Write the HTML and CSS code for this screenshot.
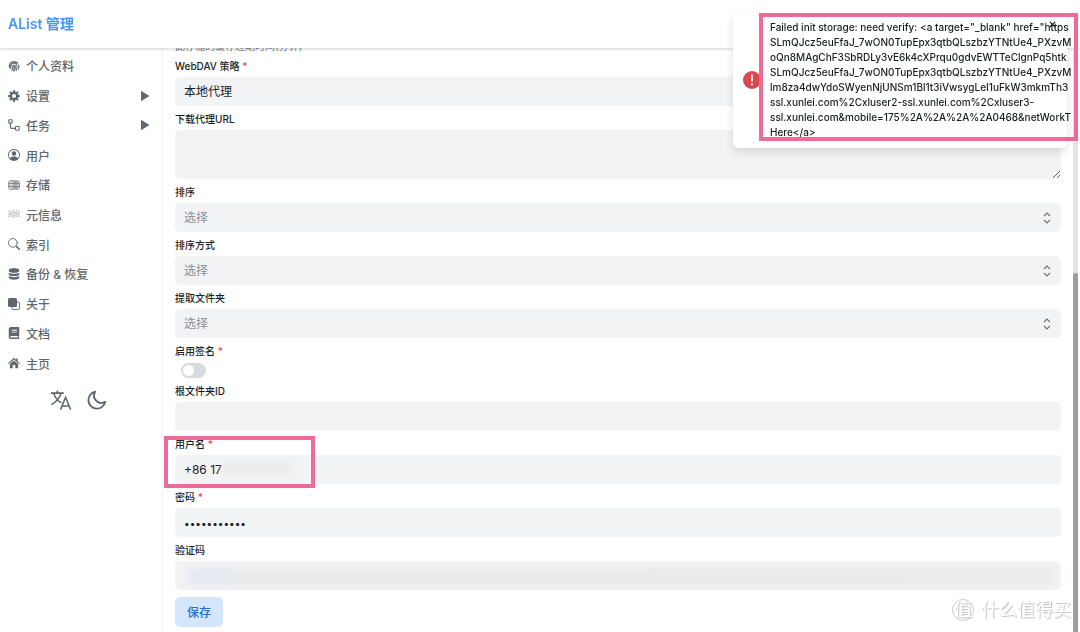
FILE: index.html
```html
<!DOCTYPE html>
<html lang="zh-CN">
<head>
  <meta charset="UTF-8">
  <meta name="viewport" content="width=device-width, initial-scale=1.0">
  <title>AList 管理</title>
  <link rel="stylesheet" href="styles.css">
</head>
<body>

<header class="header">
  <h1>AList 管理</h1>
</header>

<div class="layout">
  <aside class="sidebar">
    <nav class="menu">
      <a href="#">
        <svg viewBox="0 0 16 16" fill="none" stroke="currentColor" stroke-width="1.400" stroke-linecap="round"><path d="M3 4.2C5.5 1.2 10.500 1.200 13 4.200M1.500 8c.3-5 6-7 10-4M14.300 6.500c.6 2 .3 4-.4 5.500M3 11.500c1-1.500.6-3 1-4.500 1-3.600 7-3.600 8 .5.300 2 0 4.500-1 6.500M5 13.200c1.600-2 1-4 1.600-5.500.6-1.300 3-1 3.200.8.2 2.200-.4 4.500-1.600 6.200M8.200 8.500c.2 2-.3 4-1.400 5.800M1.800 9.800l1-3"/></svg>
        <span>个人资料</span>
      </a>
      <a href="#">
        <svg viewBox="0 0 16 16" fill="none" stroke="currentColor"><circle cx="8" cy="8" r="4.300" stroke-width="3"/><path stroke-width="3" d="M8 .3v2.400M8 13.300v2.400M.3 8h2.400M13.300 8h2.400M2.600 2.600l1.600 1.600M11.800 11.800l1.600 1.600M2.600 13.400l1.600-1.600M11.800 4.200l1.600-1.600"/></svg>
        <span>设置</span>
        <svg class="arrow" viewBox="0 0 10 12" fill="currentColor"><path d="M1 .8v10.400L9.500 6z"/></svg>
      </a>
      <a href="#">
        <svg viewBox="0 0 16 16" fill="none" stroke="currentColor" stroke-width="1.400"><rect x="1" y="1" width="4.500" height="4.500" rx="1"/><rect x="10" y="10" width="5" height="5" rx="1"/><path d="M3.200 5.500v5c0 1.400.8 2 2 2H10"/></svg>
        <span>任务</span>
        <svg class="arrow" viewBox="0 0 10 12" fill="currentColor"><path d="M1 .8v10.400L9.500 6z"/></svg>
      </a>
      <a href="#">
        <svg viewBox="0 0 16 16" fill="currentColor"><path fill-rule="evenodd" d="M8 0a8 8 0 1 0 0 16A8 8 0 0 0 8 0zm0 1.200a6.800 6.800 0 0 1 5.200 11.100C12.300 10.900 10.800 10 8 10s-4.300.9-5.200 2.300A6.800 6.800 0 0 1 8 1.200zM8 3a3 3 0 1 0 0 6 3 3 0 0 0 0-6z"/></svg>
        <span>用户</span>
      </a>
      <a href="#">
        <svg viewBox="0 0 16 16" fill="none" stroke="currentColor" stroke-width="1.200"><rect x="1" y="2.500" width="14" height="11" rx="2"/><path d="M1 6.200h14M1 9.800h14M3.500 4.400h1M6 4.400h7M3.500 8h1M6 8h7M3.500 11.700h1M6 11.700h7"/></svg>
        <span>存储</span>
      </a>
      <a href="#">
        <svg viewBox="0 0 16 16" fill="none" stroke="currentColor" stroke-width="1" opacity=".7"><path stroke-dasharray="1.500 1" d="M1.500 3v10M5 3v10M8 2v12M11 3v10M14.500 3v10M1 5l7 6M8 5l7 6M1 11l7-6M8 11l7-6"/></svg>
        <span>元信息</span>
      </a>
      <a href="#">
        <svg viewBox="0 0 16 16" fill="none" stroke="currentColor" stroke-linecap="round"><circle cx="6.500" cy="6.500" r="5.800" stroke-width="1.200"/><path stroke-width="2" d="M11.200 11.200l3.800 3.800"/></svg>
        <span>索引</span>
      </a>
      <a href="#">
        <svg viewBox="0 0 16 16" fill="currentColor"><path d="M1 3c0-3.400 14-3.400 14 0v1c0 3.200-14 3.200-14 0zM1 6.300c3 2 11 2 14 0V8.500c0 3-14 3-14 0zM1 10.800c3 2 11 2 14 0V13c0 3.400-14 3.400-14 0z"/></svg>
        <span>备份 &amp; 恢复</span>
      </a>
      <a href="#">
        <svg viewBox="0 0 16 16"><rect x="5.500" y="5.500" width="9.800" height="9.800" rx="1" fill="none" stroke="currentColor" stroke-width="1.200"/><rect x="0" y="0" width="12" height="12" rx="2" fill="currentColor"/></svg>
        <span>关于</span>
      </a>
      <a href="#">
        <svg viewBox="0 0 16 16" fill="currentColor"><path fill-rule="evenodd" d="M4 0h10a1 1 0 0 1 1 1v10.500l-.6.600v2l.6.600V16H4a3 3 0 0 1-3-3V3a3 3 0 0 1 3-3zm1 3.700v1.200h7V3.700zm0 2.500v1.200h7V6.200zM4 12a1 1 0 0 0 0 2h9v-2z"/></svg>
        <span>文档</span>
      </a>
      <a href="#">
        <svg viewBox="0 0 16 16" fill="currentColor"><path d="M8 1l2.800 2.500V2h2v3.300L16 8.200l-1 1.100L8 3.200 1 9.300 0 8.200z"/><path d="M8 4.500l5.500 4.800V15H9.800v-4.500H6.200V15H2.500V9.300z"/></svg>
        <span>主页</span>
      </a>
    </nav>
    <div class="tools">
      <button type="button" aria-label="语言">
        <svg viewBox="0 0 24 24" fill="none" stroke="currentColor" stroke-width="1.700"><path d="M1 4.500h14M8 1.500v3M12 4.500C10.500 10 7 14 1.500 17M4 4.500c1.500 5 4.500 8.500 8.500 10.500M11.500 22.500L17 9l5.500 13.500M13.300 18.500h7.400"/></svg>
      </button>
      <button type="button" aria-label="深色模式">
        <svg viewBox="0 0 24 24" fill="none" stroke="currentColor" stroke-width="2" stroke-linejoin="round"><path d="M10 3A9.300 9.300 0 1 0 21 14 8 8 0 0 1 10 3z"/></svg>
      </button>
    </div>
  </aside>

  <main class="content">
    <p class="hint">此存储的缓存过期时间(分钟)</p>
    <form class="form">
      <div class="field">
        <label for="webdav">WebDAV 策略 <em>*</em></label>
        <div class="select">
          <select id="webdav"><option>本地代理</option></select>
        </div>
      </div>
      <div class="field">
        <label for="proxy">下载代理URL</label>
        <textarea id="proxy"></textarea>
      </div>
      <div class="field">
        <label for="order">排序</label>
        <div class="select">
          <select id="order" class="empty"><option>选择</option></select>
          <svg viewBox="0 0 8 12"><path d="M1 4l3-3 3 3M1 8l3 3 3-3"/></svg>
        </div>
      </div>
      <div class="field">
        <label for="direction">排序方式</label>
        <div class="select">
          <select id="direction" class="empty"><option>选择</option></select>
          <svg viewBox="0 0 8 12"><path d="M1 4l3-3 3 3M1 8l3 3 3-3"/></svg>
        </div>
      </div>
      <div class="field">
        <label for="folder">提取文件夹</label>
        <div class="select">
          <select id="folder" class="empty"><option>选择</option></select>
          <svg viewBox="0 0 8 12"><path d="M1 4l3-3 3 3M1 8l3 3 3-3"/></svg>
        </div>
      </div>
      <div class="field">
        <label for="sign">启用签名 <em>*</em></label>
        <input type="checkbox" id="sign" class="switch">
      </div>
      <div class="field">
        <label for="root">根文件夹ID</label>
        <input type="text" id="root">
      </div>
      <div class="field marked">
        <label for="username">用户名 <em>*</em></label>
        <input type="text" id="username" value="+86 17">
      </div>
      <div class="field">
        <label for="password">密码 <em>*</em></label>
        <input type="password" id="password" value="abcdefghijk">
      </div>
      <div class="field">
        <label for="code">验证码</label>
        <div class="redacted"><input type="text" id="code"></div>
      </div>
      <button type="submit" class="save">保存</button>
    </form>
  </main>
</div>

<div class="scrollbar"><div class="thumb"></div></div>

<div class="toast" role="alert">
  <svg class="toast-icon" viewBox="0 0 18 18"><circle cx="9" cy="9" r="9" fill="#d9484c"/><path d="M9 4v6" stroke="#fff" stroke-width="1.600" stroke-linecap="round"/><circle cx="9" cy="13.300" r="1.100" fill="#fff"/></svg>
  <p>Failed init storage: need verify: &lt;a target="_blank" href="https<br>
    SLmQJcz5euFfaJ_7wON0TupEpx3qtbQLszbzYTNtUe4_PXzvM<br>
    oQn8MAgChF3SbRDLy3vE6k4cXPrqu0gdvEWTTeClgnPq5htk<br>
    SLmQJcz5euFfaJ_7wON0TupEpx3qtbQLszbzYTNtUe4_PXzvM<br>
    lm8za4dwYdoSWyenNjUNSm1Bl1t3iVwsygLeI1uFkW3mkmTh3<br>
    ssl.xunlei.com%2Cxluser2-ssl.xunlei.com%2Cxluser3-<br>
    ssl.xunlei.com&amp;mobile=175%2A%2A%2A%2A0468&amp;netWorkT<br>
    Here&lt;/a&gt;</p>
  <button type="button" class="close" aria-label="关闭"><svg viewBox="0 0 8 8"><path d="M1 1l6 6M7 1L1 7"/></svg></button>
</div>

<div class="watermark"><span class="seal">值</span>什么值得买</div>

</body>
</html>
```
FILE: styles.css
```css
*, *::before, *::after {
  box-sizing: border-box;
}
body {
  margin: 0;
  height: 100vh;
  overflow: hidden;
  background: #fff;
  color: #1a1d1f;
  font-family: Inter, "Noto Sans CJK SC", sans-serif;
  font-size: 12px;
}
button, input, select, textarea {
  font: inherit;
  color: inherit;
}
.header {
  position: relative;
  z-index: 1;
  display: flex;
  align-items: center;
  height: 48px;
  padding: 0 8px 2px;
  background: #fff;
  box-shadow: 0 1px 3px rgba(0, 0, 0, 0.18);
}
.header h1 {
  margin: 0;
  font-size: 14px;
  font-weight: 600;
  color: #4595f5;
}
.layout {
  display: flex;
}
.sidebar {
  flex: 0 0 163px;
  min-height: calc(100vh - 48px);
  padding: 3px 8px;
  border-right: 2px solid #f7f7f8;
}
.menu {
  display: grid;
  grid-auto-rows: 1fr;
  height: 327px;
}
.menu a {
  display: flex;
  align-items: center;
  gap: 6px;
  color: #60666c;
  font-weight: 500;
  text-decoration: none;
}
.menu svg {
  width: 12px;
  height: 12px;
}
.menu .arrow {
  width: 10px;
  margin-left: auto;
  margin-right: 3px;
}
.tools {
  display: flex;
  justify-content: center;
  gap: 14px;
  padding: 11px 3px 11px 0;
}
.tools button {
  display: flex;
  padding: 0;
  border: 0;
  background: none;
  color: #60666c;
}
.tools svg {
  width: 22px;
  height: 22px;
}
.content {
  flex: 1;
  min-width: 0;
  padding: 0 19px 0 12px;
}
.hint {
  margin: -10px 0 0;
  height: 18px;
  line-height: 16px;
  font-size: 10px;
  color: #787f85;
}
.form {
  display: flex;
  flex-direction: column;
  gap: 3px;
}
.field label {
  display: block;
  height: 21px;
  line-height: 20px;
  font-size: 10px;
  font-weight: 500;
}
.field em {
  color: #e5484d;
  font-style: normal;
}
.field input, .field select, .field textarea {
  display: block;
  width: 100%;
  height: 29px;
  padding: 0 9px;
  border: 0;
  border-radius: 5px;
  background: #f1f3f5;
  outline: none;
}
.field input[type="password"] {
  font-size: 10px;
}
.field textarea {
  height: 49px;
  resize: vertical;
}
.select {
  display: grid;
  align-items: center;
}
.select select, .select svg {
  grid-area: 1 / 1;
}
.field select {
  appearance: none;
}
.field .empty {
  color: #8b9196;
}
.select svg {
  justify-self: end;
  width: 8px;
  height: 12px;
  margin-right: 10px;
  fill: none;
  stroke: #70767b;
  stroke-width: 1.2;
  pointer-events: none;
}
.field .switch {
  appearance: none;
  width: 25px;
  height: 15px;
  margin: 1px 0 0 6px;
  padding: 2px;
  border-radius: 8px;
  background: #d7dbdf;
}
.switch::before {
  content: "";
  display: block;
  width: 11px;
  height: 11px;
  border-radius: 50%;
  background: #fff;
}
.marked {
  position: relative;
}
.marked::before {
  content: "";
  position: absolute;
  top: 2px;
  left: -11px;
  width: 151px;
  height: 52px;
  border: 4px solid #ed6a99;
  pointer-events: none;
}
/* blurred strip over the rest of the number */
.marked::after {
  content: "";
  position: absolute;
  top: 28px;
  left: 48px;
  width: 68px;
  height: 12px;
  background: #e9ebed;
  filter: blur(3px);
}
.redacted {
  position: relative;
}
.redacted::after {
  content: "";
  position: absolute;
  inset: 7px 8px 5px 14px;
  background: linear-gradient(90deg, #e3e9f3, #e7e9eb 6%, #e8eaec);
  filter: blur(4px);
}
.save {
  align-self: flex-start;
  height: 30px;
  margin-top: 4px;
  padding: 0 12px 2px;
  border: 0;
  border-radius: 5px;
  background: #d4e6fb;
  color: #2f6bd0;
  font-weight: 500;
}
.scrollbar {
  position: fixed;
  top: 49px;
  right: 2px;
  bottom: 0;
  width: 5px;
  padding-top: 224px;
  background: #e4e4e4;
}
.thumb {
  height: 100%;
  border-radius: 2px 2px 0 0;
  background: #9c9c9c;
}
.toast {
  position: fixed;
  z-index: 2;
  top: 12px;
  right: 13px;
  width: 334px;
  display: flex;
  align-items: center;
  gap: 9px;
  padding: 8px 10px;
  border-radius: 6px;
  background: #fff;
  box-shadow: 0 4px 10px rgba(0, 0, 0, 0.12);
}
.toast::after {
  content: "";
  position: absolute;
  top: 1px;
  left: 26px;
  width: 319px;
  height: 128px;
  border: 4px solid #ed6a99;
  pointer-events: none;
}
.toast-icon {
  flex: none;
  width: 18px;
  height: 18px;
}
.toast p {
  flex: none;
  width: 305px;
  margin: 0;
  overflow: hidden;
  font-size: 10px;
  line-height: 15px;
  font-weight: 500;
  white-space: nowrap;
}
.close {
  position: absolute;
  top: 9px;
  right: 11px;
  display: flex;
  padding: 0;
  border: 0;
  background: none;
}
.close svg {
  width: 7px;
  height: 7px;
  stroke: #1a1d1f;
  stroke-width: 1.4;
}
.watermark {
  position: fixed;
  right: 9px;
  bottom: 10px;
  display: flex;
  align-items: center;
  gap: 7px;
  font-size: 18px;
  line-height: 24px;
  color: #fff;
  text-shadow: 1px 1px 1px #bbb;
}
.seal {
  width: 22px;
  height: 22px;
  border: 1px solid #ccc;
  border-radius: 50%;
  line-height: 20px;
  text-align: center;
}
```
